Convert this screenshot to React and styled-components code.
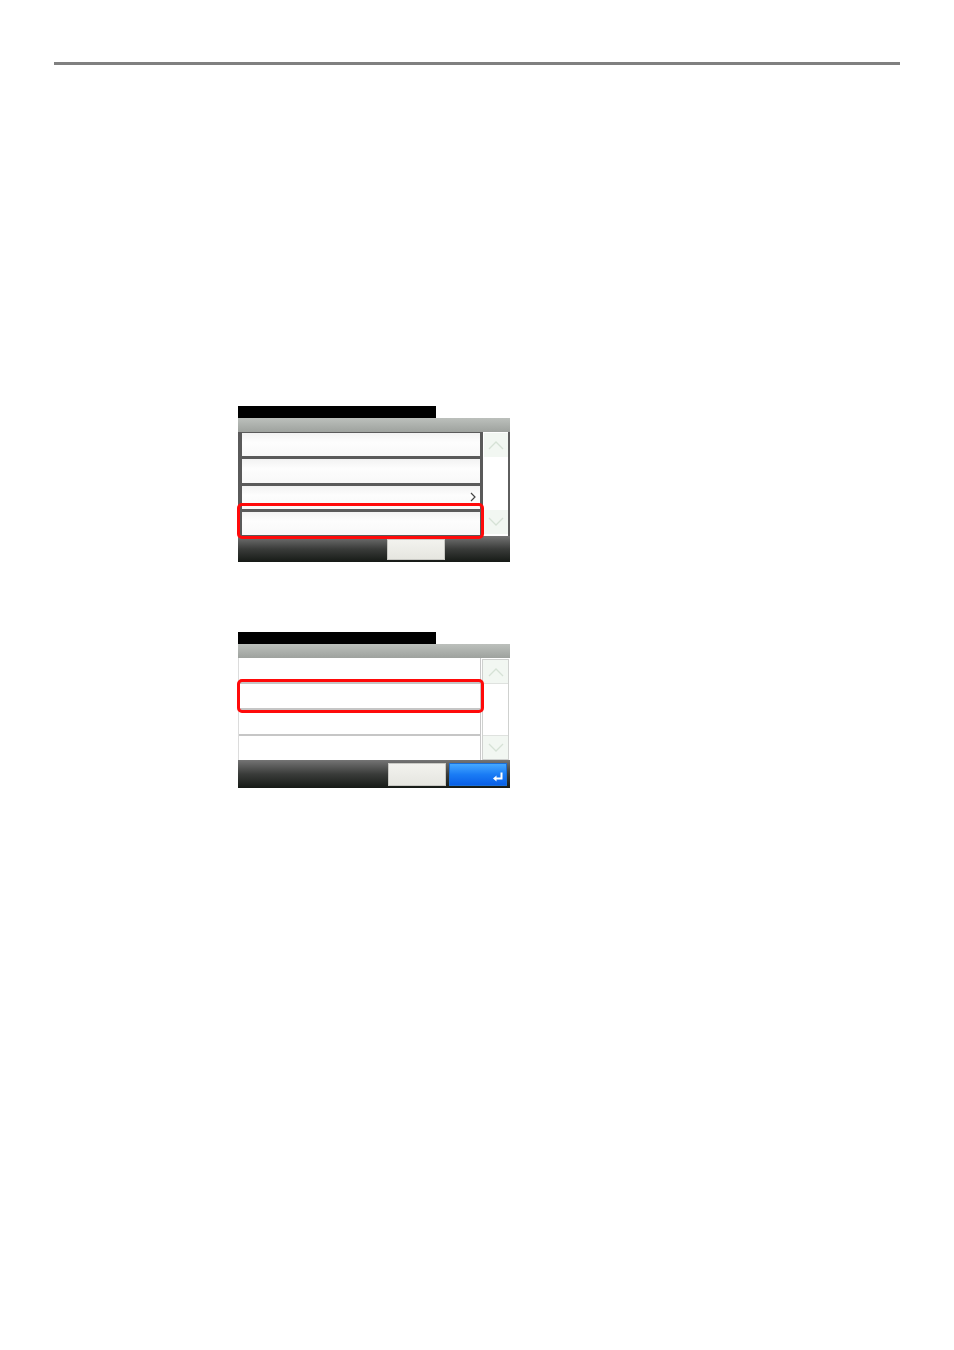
import React from 'react';
import styled, { createGlobalStyle, css } from 'styled-components';

const GlobalStyle = createGlobalStyle`
  html, body {
    margin: 0;
    padding: 0;
    background: #ffffff;
    font-family: "Liberation Sans", Arial, sans-serif;
  }
`;

const Page = styled.div`
  width: 954px;
  height: 1350px;
  padding-top: 62px;
  box-sizing: border-box;
`;

const Rule = styled.div`
  height: 3px;
  margin: 0 54px;
  background: #808080;
`;

const Panels = styled.div`
  display: flex;
  flex-direction: column;
  gap: 70px;
  margin-top: 341px;
  padding-left: 238px;
`;

const Screen = styled.div`
  width: 272px;
  display: flex;
  flex-direction: column;
`;

const TitleBar = styled.div`
  width: 198px;
  height: 12px;
  background: #000;
`;

const Header = styled.div`
  height: 14px;
  background: linear-gradient(#bcc0bc, #9ea29e);
`;

const Body = styled.div`
  display: flex;
  height: ${p => p.$h}px;
`;

const Rows = styled.div`
  width: 245px;
  box-sizing: border-box;
  display: flex;
  flex-direction: column;
  ${p => p.$dark ? css`
    background: #5a5a5a;
    padding: 1px 3px 1px 4px;
    gap: 3px;
  ` : css`
    background: #ffffff;
    border-left: 1px solid #dcdcdc;
    border-right: 1px solid #c8c8c8;
  `}
`;

const Row = styled.div`
  flex: 1;
  position: relative;
  display: flex;
  align-items: center;
  justify-content: flex-end;
  padding-right: 4px;
  ${p => p.$dark ? css`
    background: linear-gradient(#f2f2f2, #fdfdfd 40%, #f8f8f8);
  ` : css`
    background: #ffffff;
    border-bottom: 2px solid #c6c6c6;
    &:last-child { border-bottom: none; }
  `}
`;

const Highlight = styled.div`
  position: absolute;
  z-index: 2;
  top: ${p => p.$t}px;
  left: ${p => p.$l}px;
  right: ${p => p.$r}px;
  bottom: ${p => p.$b}px;
  border: 3px solid #ff0a0a;
  border-radius: 5px;
  pointer-events: none;
`;

const Scroll = styled.div`
  width: 27px;
  box-sizing: border-box;
  display: flex;
  flex-direction: column;
  justify-content: space-between;
  background: #ffffff;
  ${p => p.$dark ? css`
    border-right: 2px solid #5e5e5e;
    padding: 1px 0 2px 1px;
  ` : css`
    margin: 1px 1px 0 1px;
    border: 1px solid #cfd1cf;
  `}
`;

const ScrollBtn = styled.div`
  height: ${p => p.$dark ? 24 : 23}px;
  display: flex;
  align-items: center;
  justify-content: center;
  background: #f2f7f2;
  ${p => !p.$dark && css`
    border-top: 1px solid #dfe2df;
    &:first-child { border-top: none; border-bottom: 1px solid #dfe2df; }
  `}
`;

const Footer = styled.div`
  height: ${p => p.$h}px;
  display: flex;
  align-items: center;
  justify-content: flex-end;
  gap: 3px;
  padding-right: ${p => p.$pr}px;
  background: linear-gradient(#747474, #3a3c3a 50%, #161a16);
`;

const Button = styled.div`
  width: 58px;
  height: ${p => p.$h}px;
  box-sizing: border-box;
  border: 1px solid #c9c9c4;
  background: linear-gradient(#f2f2ee, #e6e6e0);
`;

const EnterButton = styled.div`
  width: 58px;
  height: 23px;
  box-sizing: border-box;
  border: 1px solid #1a6fd8;
  background: linear-gradient(#45a8ff, #1a7cf5 50%, #0a5fe6);
  display: flex;
  align-items: flex-end;
  justify-content: flex-end;
  padding: 0 3px 3px 0;
`;

const Chevron = ({ up }) => (
  <svg width="18" height="10" viewBox="0 0 18 10">
    <polyline
      points={up ? '2,9 9,2 16,9' : '2,1 9,8 16,1'}
      fill="none"
      stroke="#d6e2d6"
      strokeWidth="1.3"
    />
  </svg>
);

const Arrow = () => (
  <svg width="6" height="10" viewBox="0 0 6 10">
    <polyline points="1,1 5,5 1,9" fill="none" stroke="#444" strokeWidth="1.2" />
  </svg>
);

const ReturnIcon = () => (
  <svg width="10" height="10" viewBox="0 0 10 10">
    <path d="M8.5 0.5 V6.5 H2.5" fill="none" stroke="#fff" strokeWidth="2" />
    <polygon points="0,6.5 3.5,3.5 3.5,9.5" fill="#fff" />
  </svg>
);

const App = () => (
  <Page>
    <GlobalStyle />
    <Rule />
    <Panels>
      <Screen>
        <TitleBar />
        <Header />
        <Body $h={104}>
          <Rows $dark>
            <Row $dark />
            <Row $dark />
            <Row $dark><Arrow /></Row>
            <Row $dark>
              <Highlight $t={-9} $l={-5} $r={-4} $b={-4} />
            </Row>
          </Rows>
          <Scroll $dark>
            <ScrollBtn $dark><Chevron up /></ScrollBtn>
            <ScrollBtn $dark><Chevron /></ScrollBtn>
          </Scroll>
        </Body>
        <Footer $h={26} $pr={65}>
          <Button $h={21} />
        </Footer>
      </Screen>

      <Screen>
        <TitleBar />
        <Header />
        <Body $h={102}>
          <Rows>
            <Row />
            <Row>
              <Highlight $t={-5} $l={-2} $r={-4} $b={-5} />
            </Row>
            <Row />
            <Row />
          </Rows>
          <Scroll>
            <ScrollBtn><Chevron up /></ScrollBtn>
            <ScrollBtn><Chevron /></ScrollBtn>
          </Scroll>
        </Body>
        <Footer $h={28} $pr={3}>
          <Button $h={23} />
          <EnterButton><ReturnIcon /></EnterButton>
        </Footer>
      </Screen>
    </Panels>
  </Page>
);

export default App;
